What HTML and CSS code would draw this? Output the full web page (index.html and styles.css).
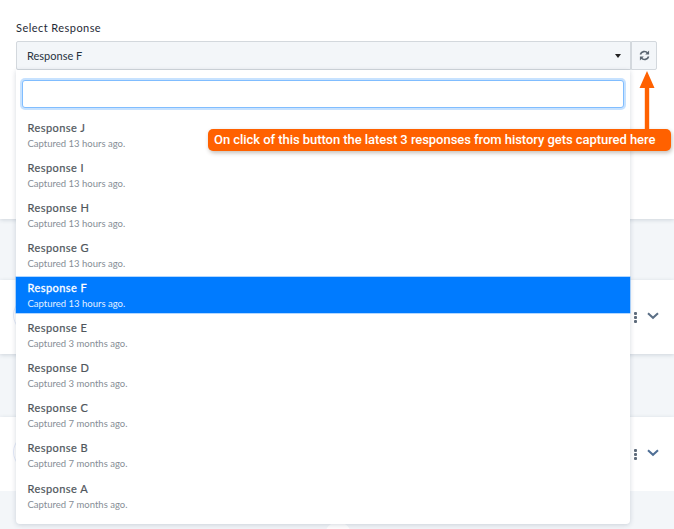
FILE: index.html
```html
<!DOCTYPE html>
<html lang="en">
<head>
<meta charset="utf-8">
<title>Select Response</title>
<link rel="stylesheet" href="styles.css">
</head>
<body>
<div class="page">
  <section class="top">
    <label class="label">Select Response</label>
    <div class="select-row">
      <div class="select"><span>Response F</span><i class="caret"></i></div>
      <button class="refresh" aria-label="Refresh">
        <svg viewBox="0 0 12 12" width="11" height="11"><g fill="none" stroke="#5a6570" stroke-width="1.8"><path d="M1.5 5A4.6 4.6 0 0 1 9.4 3.2"/><path d="M10.5 7A4.6 4.6 0 0 1 2.6 8.8"/></g><path d="M11 .6V4.8H6.8z M1 11.4V7.2H5.2z" fill="#5a6570"/></svg>
      </button>
    </div>
  </section>
  <div class="band band-a"></div>
  <section class="card"><span class="avatar"></span><div class="actions"><span class="dots"><b></b><b></b><b></b></span><svg class="chev" viewBox="0 0 12 8" width="12" height="8"><path d="M1 1.2l5 4.6 5-4.6" fill="none" stroke="#5b6f86" stroke-width="2"/></svg></div></section>
  <div class="band band-b"></div>
  <section class="card"><span class="avatar"></span><div class="actions"><span class="dots"><b></b><b></b><b></b></span><svg class="chev" viewBox="0 0 12 8" width="12" height="8"><path d="M1 1.2l5 4.6 5-4.6" fill="none" stroke="#4f6f96" stroke-width="2"/></svg></div></section>
  <div class="band band-c"><span class="notch"></span></div>

  <div class="dropdown">
    <div class="search"></div>
    <ul class="list">
      <li><strong>Response J</strong><small>Captured 13 hours ago.</small></li>
      <li><strong>Response I</strong><small>Captured 13 hours ago.</small></li>
      <li><strong>Response H</strong><small>Captured 13 hours ago.</small></li>
      <li><strong>Response G</strong><small>Captured 13 hours ago.</small></li>
      <li class="active"><strong>Response F</strong><small>Captured 13 hours ago.</small></li>
      <li><strong>Response E</strong><small>Captured 3 months ago.</small></li>
      <li><strong>Response D</strong><small>Captured 3 months ago.</small></li>
      <li><strong>Response C</strong><small>Captured 7 months ago.</small></li>
      <li><strong>Response B</strong><small>Captured 7 months ago.</small></li>
      <li class="last"><strong>Response A</strong><small>Captured 7 months ago.</small></li>
    </ul>
  </div>

  <div class="note">On click of this button the latest 3 responses from history gets captured here</div>
  <svg class="arrow" viewBox="0 0 16 60" width="16" height="60"><path d="M8 0L15.5 17H10.2V59H5.8V17H.5z" fill="#ff6100"/></svg>
</div>
</body>
</html>
```
FILE: styles.css
```css
* { box-sizing: border-box; }
html, body { margin: 0; padding: 0; }
body { background: #f3f6f9; font-family: "Lato", "Open Sans", sans-serif; overflow: hidden; }
.page { position: relative; width: 674px; height: 529px; overflow: hidden; display: flex; flex-direction: column; }
.top { height: 219px; background: #fff; padding: 21px 16px 0; box-shadow: 0 1px 4px rgba(40,60,90,.18); position: relative; flex: none; }
.label { display: block; font-size: 11px; line-height: 14px; color: #1f2a36; letter-spacing: .45px; margin-bottom: 6px; }
.select-row { display: flex; width: 642px; }
.select { flex: none; width: 615px; height: 29px; background: #f3f6f9; border: 1px solid #d3d8dd; border-radius: 2px 0 0 2px; display: flex; align-items: center; justify-content: space-between; padding: 0 10px; font-size: 11px; color: #27323e; }
.caret { width: 0; height: 0; border: 3px solid transparent; border-top: 4px solid #222; border-bottom: 0; margin-right: -1px; }
.refresh { flex: none; width: 26px; height: 29px; padding: 0; background: #f3f6f9; border: 1px solid #d3d8dd; border-radius: 0 2px 2px 0; display: flex; align-items: center; justify-content: center; }
.band { flex: none; background: #f3f6f9; }
.band-a { height: 61px; }
.band-b { height: 63px; }
.band-c { flex: 1; position: relative; }
.card { flex: none; height: 74px; background: #fff; position: relative; box-shadow: 0 1px 4px rgba(40,60,90,.18); display: flex; align-items: center; justify-content: flex-end; padding-right: 15px; }
.avatar { position: absolute; left: 13px; top: 17px; width: 36px; height: 36px; border-radius: 50%; border: 1px solid #e3e9f8; }
.actions { display: flex; align-items: flex-start; gap: 10px; margin-top: 1px; }
.dots { display: flex; flex-direction: column; gap: 1px; }
.dots b { display: block; width: 3.5px; height: 3px; background: #5e6b7b; border-radius: 1px; }
.notch { position: absolute; left: 325px; top: 31px; width: 26px; height: 26px; background: #fff; border-radius: 50%; }
.dropdown { position: absolute; left: 16px; top: 70px; width: 614px; height: 454px; background: #fff; border-radius: 0 0 4px 4px; box-shadow: 0 1px 5px rgba(40,60,90,.2); padding: 10px 6px 0; }
.search { height: 28px; width: 602px; background: #fff; border: 1px solid #80bdff; border-radius: 3px; box-shadow: 0 0 0 2px rgba(0,123,255,.22); }
.list { list-style: none; margin: 10px -6px 0; padding: 0; }
.list li { height: 36px; margin-bottom: 4px; padding: 2px 11.5px 0; display: flex; flex-direction: column; }
.list strong { font-size: 11px; line-height: 15px; font-weight: 400; color: #50565c; letter-spacing: .45px; -webkit-text-stroke: .2px #50565c; }
.list small { font-size: 9.5px; line-height: 15px; color: #868e96; padding-top: .5px; }
.list .active { background: #007bff; box-shadow: 0 0 0 .5px #66b0ff; margin-top: -1px; margin-bottom: 5px; padding-top: 3px; }
.list .active strong { color: #fff; -webkit-text-stroke: .3px #fff; }
.list .active small { color: #e3f0ff; }
.list .last { padding-top: 3px; }
.note { position: absolute; left: 208px; top: 129px; width: 463px; height: 22px; padding-left: 6px; background: #ff6100; border-radius: 5px; color: #fff; font: 500 13px/22px "Roboto", sans-serif; letter-spacing: -.05px; white-space: nowrap; box-shadow: 1px 2px 4px rgba(60,40,20,.3); }
.arrow { position: absolute; left: 638.5px; top: 71px; }
```
